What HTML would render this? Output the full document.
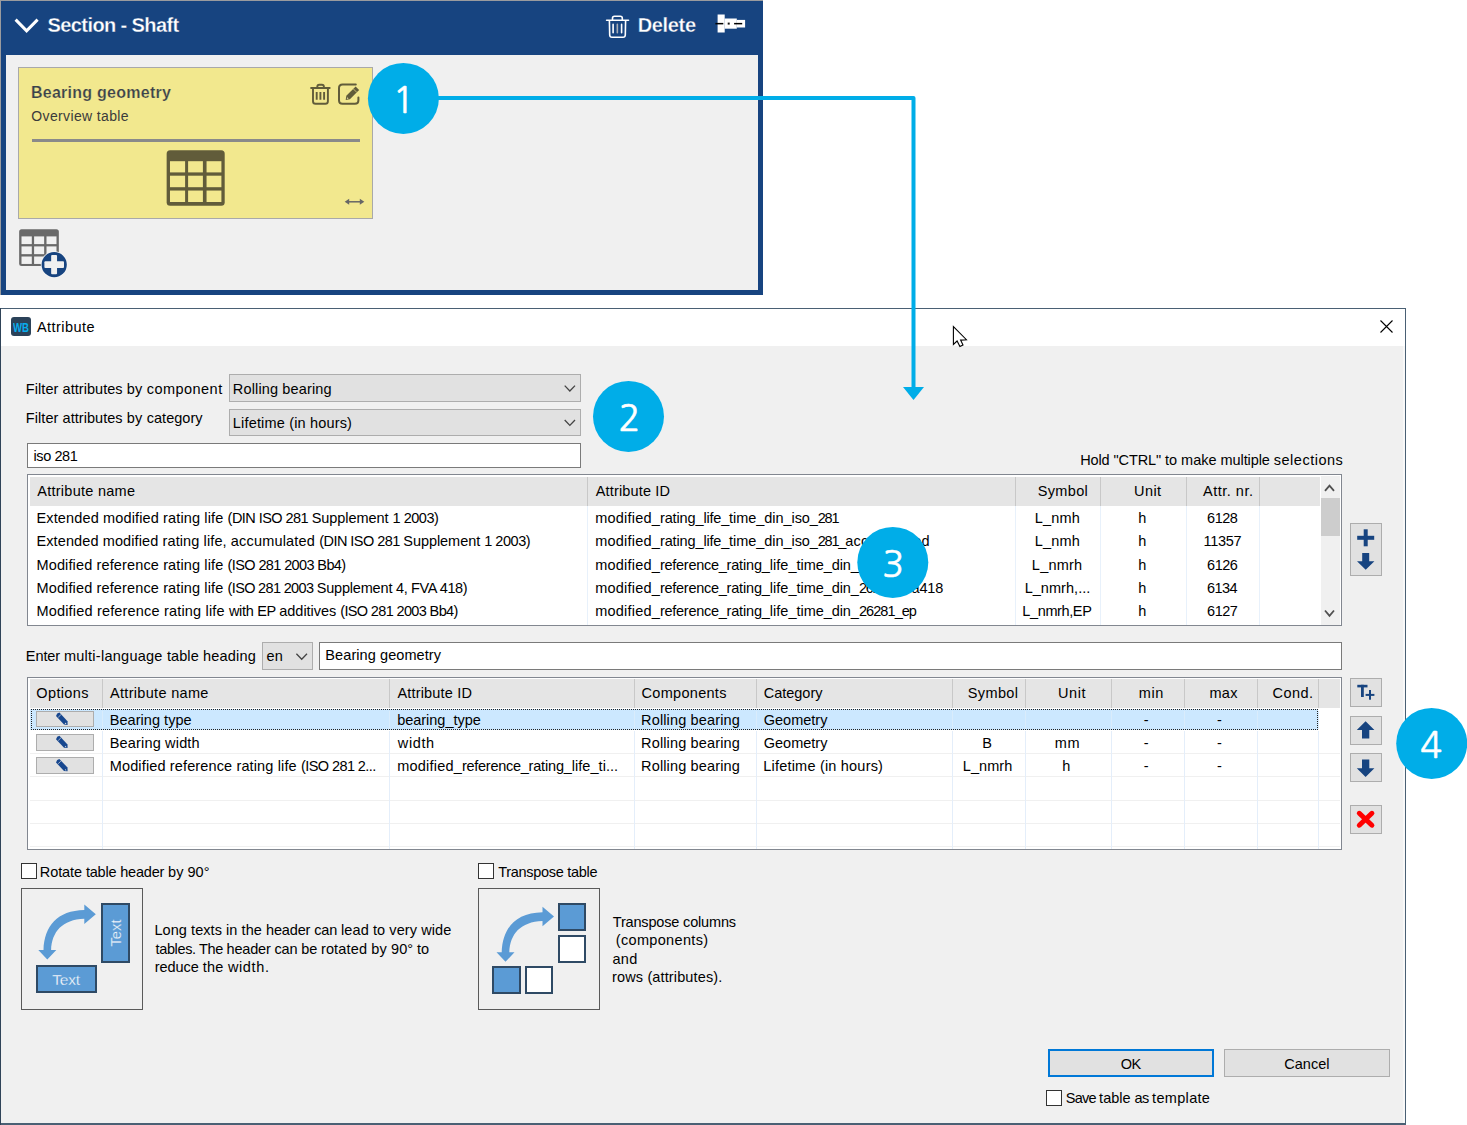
<!DOCTYPE html>
<html lang="en"><head><meta charset="utf-8"><title>Attribute</title>
<style>
html,body{margin:0;padding:0;background:#fff}
body{width:1467px;height:1125px;position:relative;overflow:hidden;font-family:"Liberation Sans",sans-serif}
.b{position:absolute;box-sizing:border-box}
.t{position:absolute;white-space:nowrap;line-height:20px;font-size:14.5px;color:#000}
</style></head><body>
<div class="b" style="left:0px;top:0px;width:763px;height:295px;background:#9a9b9e"></div>
<div class="b" style="left:1px;top:1px;width:762px;height:294px;background:#174480"></div>
<div class="b" style="left:6px;top:55px;width:752px;height:234.5px;background:#f0f0f0"></div>
<div class="b" style="left:18px;top:67px;width:355px;height:151.5px;background:#f2e88e;border:1px solid #a9a9a9"></div>
<div class="b" style="left:32px;top:139.1px;width:327.5px;height:2.7px;background:#8a8a8a"></div>
<div class="b" style="left:0px;top:308px;width:1406px;height:817px;background:#f0f0f0;border:1px solid #4a6074;border-bottom-width:2px"></div>
<div class="b" style="left:0px;top:308px;width:1.3px;height:817px;background:#2f4358"></div>
<div class="b" style="left:1.3px;top:309px;width:1403.7px;height:37px;background:#fff"></div>
<div class="b" style="left:1403px;top:346px;width:2px;height:777px;background:#f8f8f8"></div>
<div class="b" style="left:229px;top:374px;width:352px;height:28px;background:#e1e1e1;border:1px solid #adadad"></div>
<div class="b" style="left:229px;top:409px;width:352px;height:27px;background:#e1e1e1;border:1px solid #adadad"></div>
<div class="b" style="left:27px;top:443px;width:554px;height:25px;background:#fff;border:1px solid #7a7a7a"></div>
<div class="b" style="left:27px;top:474px;width:1315px;height:152px;background:#fff;border:1px solid #828790"></div>
<div class="b" style="left:30px;top:477px;width:1289.5px;height:29px;background:#e5e5e5"></div>
<div class="b" style="left:587.0px;top:477px;width:1px;height:29px;background:#c8c8c8"></div>
<div class="b" style="left:587.0px;top:506px;width:1px;height:119px;background:#e8f1fb"></div>
<div class="b" style="left:1015.1px;top:477px;width:1px;height:29px;background:#c8c8c8"></div>
<div class="b" style="left:1015.1px;top:506px;width:1px;height:119px;background:#e8f1fb"></div>
<div class="b" style="left:1100.2px;top:477px;width:1px;height:29px;background:#c8c8c8"></div>
<div class="b" style="left:1100.2px;top:506px;width:1px;height:119px;background:#e8f1fb"></div>
<div class="b" style="left:1186.1px;top:477px;width:1px;height:29px;background:#c8c8c8"></div>
<div class="b" style="left:1186.1px;top:506px;width:1px;height:119px;background:#e8f1fb"></div>
<div class="b" style="left:1259.2px;top:477px;width:1px;height:29px;background:#c8c8c8"></div>
<div class="b" style="left:1259.2px;top:506px;width:1px;height:119px;background:#e8f1fb"></div>
<div class="b" style="left:1320.5px;top:476px;width:19px;height:149px;background:#f0f0f0"></div>
<div class="b" style="left:1320.5px;top:497.5px;width:19px;height:38px;background:#cdcdcd"></div>
<div class="b" style="left:1350px;top:523px;width:31.5px;height:53px;background:#e1e1e1;border:1px solid #adadad"></div>
<div class="b" style="left:262px;top:642px;width:51px;height:28px;background:#e1e1e1;border:1px solid #adadad"></div>
<div class="b" style="left:319px;top:642px;width:1023px;height:28px;background:#fff;border:1px solid #7a7a7a"></div>
<div class="b" style="left:27px;top:677px;width:1315px;height:173px;background:#fff;border:1px solid #828790"></div>
<div class="b" style="left:30px;top:679px;width:1309.5px;height:29px;background:#e5e5e5"></div>
<div class="b" style="left:31px;top:709px;width:1287px;height:21px;background:#cce8ff;border:1px dotted #222"></div>
<div class="b" style="left:30px;top:709px;width:1px;height:21px;background:#cce8ff"></div>
<div class="b" style="left:30px;top:753.0px;width:1310px;height:1px;background:#f0f0f0"></div>
<div class="b" style="left:30px;top:776.3px;width:1310px;height:1px;background:#f0f0f0"></div>
<div class="b" style="left:30px;top:799.8px;width:1310px;height:1px;background:#f0f0f0"></div>
<div class="b" style="left:30px;top:823.2px;width:1310px;height:1px;background:#f0f0f0"></div>
<div class="b" style="left:30px;top:846.2px;width:1310px;height:1px;background:#f0f0f0"></div>
<div class="b" style="left:102.1px;top:679px;width:1px;height:29px;background:#c8c8c8"></div>
<div class="b" style="left:102.1px;top:730.5px;width:1px;height:118.5px;background:#e4eefa"></div>
<div class="b" style="left:102.1px;top:710.5px;width:1px;height:18.5px;background:#d9ecfc"></div>
<div class="b" style="left:389.2px;top:679px;width:1px;height:29px;background:#c8c8c8"></div>
<div class="b" style="left:389.2px;top:730.5px;width:1px;height:118.5px;background:#e4eefa"></div>
<div class="b" style="left:389.2px;top:710.5px;width:1px;height:18.5px;background:#d9ecfc"></div>
<div class="b" style="left:633.9px;top:679px;width:1px;height:29px;background:#c8c8c8"></div>
<div class="b" style="left:633.9px;top:730.5px;width:1px;height:118.5px;background:#e4eefa"></div>
<div class="b" style="left:633.9px;top:710.5px;width:1px;height:18.5px;background:#d9ecfc"></div>
<div class="b" style="left:756.2px;top:679px;width:1px;height:29px;background:#c8c8c8"></div>
<div class="b" style="left:756.2px;top:730.5px;width:1px;height:118.5px;background:#e4eefa"></div>
<div class="b" style="left:756.2px;top:710.5px;width:1px;height:18.5px;background:#d9ecfc"></div>
<div class="b" style="left:951.7px;top:679px;width:1px;height:29px;background:#c8c8c8"></div>
<div class="b" style="left:951.7px;top:730.5px;width:1px;height:118.5px;background:#e4eefa"></div>
<div class="b" style="left:951.7px;top:710.5px;width:1px;height:18.5px;background:#d9ecfc"></div>
<div class="b" style="left:1025.0px;top:679px;width:1px;height:29px;background:#c8c8c8"></div>
<div class="b" style="left:1025.0px;top:730.5px;width:1px;height:118.5px;background:#e4eefa"></div>
<div class="b" style="left:1025.0px;top:710.5px;width:1px;height:18.5px;background:#d9ecfc"></div>
<div class="b" style="left:1110.7px;top:679px;width:1px;height:29px;background:#c8c8c8"></div>
<div class="b" style="left:1110.7px;top:730.5px;width:1px;height:118.5px;background:#e4eefa"></div>
<div class="b" style="left:1110.7px;top:710.5px;width:1px;height:18.5px;background:#d9ecfc"></div>
<div class="b" style="left:1184.4px;top:679px;width:1px;height:29px;background:#c8c8c8"></div>
<div class="b" style="left:1184.4px;top:730.5px;width:1px;height:118.5px;background:#e4eefa"></div>
<div class="b" style="left:1184.4px;top:710.5px;width:1px;height:18.5px;background:#d9ecfc"></div>
<div class="b" style="left:1257.4px;top:679px;width:1px;height:29px;background:#c8c8c8"></div>
<div class="b" style="left:1257.4px;top:730.5px;width:1px;height:118.5px;background:#e4eefa"></div>
<div class="b" style="left:1257.4px;top:710.5px;width:1px;height:18.5px;background:#d9ecfc"></div>
<div class="b" style="left:1318.3px;top:679px;width:1px;height:29px;background:#c8c8c8"></div>
<div class="b" style="left:1318.3px;top:730.5px;width:1px;height:118.5px;background:#e4eefa"></div>
<div class="b" style="left:1318.3px;top:710.5px;width:1px;height:18.5px;background:#d9ecfc"></div>
<div class="b" style="left:35.7px;top:711px;width:58.3px;height:16px;background:#e1e1e1;border:1px solid #adadad"></div>
<div class="b" style="left:35.7px;top:734px;width:58.3px;height:16.7px;background:#e1e1e1;border:1px solid #adadad"></div>
<div class="b" style="left:35.7px;top:757.2px;width:58.3px;height:16.6px;background:#e1e1e1;border:1px solid #adadad"></div>
<div class="b" style="left:1350px;top:677.5px;width:31.6px;height:29.2px;background:#e1e1e1;border:1px solid #adadad"></div>
<div class="b" style="left:1350px;top:715.5px;width:31.6px;height:29px;background:#e1e1e1;border:1px solid #adadad"></div>
<div class="b" style="left:1350px;top:753.2px;width:31.6px;height:29.2px;background:#e1e1e1;border:1px solid #adadad"></div>
<div class="b" style="left:1350px;top:805px;width:31.6px;height:28.6px;background:#e1e1e1;border:1px solid #adadad"></div>
<div class="b" style="left:21px;top:863px;width:16px;height:16px;background:#fff;border:1px solid #333"></div>
<div class="b" style="left:478px;top:863px;width:16px;height:16px;background:#fff;border:1px solid #333"></div>
<div class="b" style="left:1046.4px;top:1089.6px;width:16px;height:16px;background:#fff;border:1px solid #333"></div>
<div class="b" style="left:21px;top:888px;width:122px;height:121.7px;border:1px solid #5a5a5a"></div>
<div class="b" style="left:478px;top:888px;width:122px;height:121.7px;border:1px solid #5a5a5a"></div>
<div class="b" style="left:36px;top:965px;width:60.6px;height:28.2px;background:#5b9bd5;border:2px solid #2f4a65"></div>
<div class="b" style="left:101.4px;top:902.6px;width:28.3px;height:60.1px;background:#5b9bd5;border:2px solid #2f4a65"></div>
<div class="b" style="left:557.6px;top:902.6px;width:28.2px;height:28.4px;background:#5b9bd5;border:2px solid #2f4a65"></div>
<div class="b" style="left:557.6px;top:934.6px;width:28.2px;height:28.4px;background:#fff;border:2px solid #2f4a65"></div>
<div class="b" style="left:492.2px;top:966.1px;width:28.8px;height:28.3px;background:#5b9bd5;border:2px solid #2f4a65"></div>
<div class="b" style="left:524.5px;top:966.1px;width:28.5px;height:28.3px;background:#fff;border:2px solid #2f4a65"></div>
<div class="b" style="left:1048px;top:1049px;width:166px;height:28.3px;background:#e1e1e1;border:2px solid #0078d7"></div>
<div class="b" style="left:1223.8px;top:1049px;width:166.2px;height:28.3px;background:#e1e1e1;border:1px solid #adadad"></div>
<span class="t" style="left:95.5px;top:922.6px;width:40px;text-align:center;font-size:14.8px;color:#fff;-webkit-text-stroke:0.3px #5b9bd5;transform:rotate(-90deg);transform-origin:50% 50%">Text</span>
<div class="b" style="left:11.2px;top:316.8px;width:19.4px;height:19.2px;background:#2b4259;border-radius:3px"></div>
<span class="t" style="left:5.8px;top:317.7px;width:30px;text-align:center;font-size:12px;font-weight:bold;color:#08aeee;transform:scaleX(0.8);transform-origin:50% 50%">WB</span>
<span class="t" style="left:47.59px;top:15.07px;font-size:20px;font-weight:bold;color:#fff;letter-spacing:-0.600px;-webkit-text-stroke:0.3px #174480">Section - Shaft</span>
<span class="t" style="left:637.75px;top:15.07px;font-size:20px;font-weight:bold;color:#fff;letter-spacing:-0.356px;-webkit-text-stroke:0.3px #174480">Delete</span>
<span class="t" style="left:31.00px;top:83.46px;font-size:16px;font-weight:bold;color:#3b424c;letter-spacing:0.257px;-webkit-text-stroke:0.2px #f2e88e">Bearing geometry</span>
<span class="t" style="left:31.34px;top:105.75px;font-size:14px;color:#3b3b3b;letter-spacing:0.356px">Overview table</span>
<span class="t" style="left:36.90px;top:317.28px;letter-spacing:0.461px">Attribute</span>
<span class="t" style="left:232.87px;top:378.78px;letter-spacing:0.137px">Rolling bearing</span>
<span class="t" style="left:232.87px;top:412.58px;letter-spacing:0.169px">Lifetime (in hours)</span>
<span class="t" style="left:33.49px;top:445.58px;letter-spacing:-0.410px">iso 281</span>
<span class="t" style="left:37.20px;top:480.98px;letter-spacing:0.268px">Attribute name</span>
<span class="t" style="left:595.80px;top:480.98px;letter-spacing:0.143px">Attribute ID</span>
<span class="t" style="left:1037.75px;top:480.98px;letter-spacing:0.332px">Symbol</span>
<span class="t" style="left:1134.09px;top:480.98px;letter-spacing:0.424px">Unit</span>
<span class="t" style="left:1203.00px;top:480.98px;letter-spacing:0.509px">Attr. nr.</span>
<span class="t" style="left:1034.87px;top:507.68px;letter-spacing:0.153px">L_nmh</span>
<span class="t" style="left:1138.32px;top:507.68px">h</span>
<span class="t" style="left:1207.12px;top:507.68px;letter-spacing:-0.497px">6128</span>
<span class="t" style="left:1034.87px;top:531.28px;letter-spacing:0.153px">L_nmh</span>
<span class="t" style="left:1138.32px;top:531.28px">h</span>
<span class="t" style="left:1203.59px;top:531.28px;letter-spacing:-0.338px">11357</span>
<span class="t" style="left:1031.87px;top:554.78px;letter-spacing:0.217px">L_nmrh</span>
<span class="t" style="left:1138.32px;top:554.78px">h</span>
<span class="t" style="left:1207.12px;top:554.78px;letter-spacing:-0.497px">6126</span>
<span class="t" style="left:1024.67px;top:577.58px;letter-spacing:0.040px">L_nmrh,...</span>
<span class="t" style="left:1138.32px;top:577.58px">h</span>
<span class="t" style="left:1207.12px;top:577.58px;letter-spacing:-0.572px">6134</span>
<span class="t" style="left:1022.37px;top:600.98px;letter-spacing:-0.387px">L_nmrh,EP</span>
<span class="t" style="left:1138.32px;top:600.98px">h</span>
<span class="t" style="left:1207.12px;top:600.98px;letter-spacing:-0.497px">6127</span>
<span class="t" style="left:266.55px;top:645.98px;letter-spacing:0.139px">en</span>
<span class="t" style="left:325.37px;top:645.28px;letter-spacing:0.079px">Bearing geometry</span>
<span class="t" style="left:36.32px;top:682.88px;letter-spacing:0.360px">Options</span>
<span class="t" style="left:110.00px;top:682.88px;letter-spacing:0.314px">Attribute name</span>
<span class="t" style="left:397.40px;top:682.88px;letter-spacing:0.189px">Attribute ID</span>
<span class="t" style="left:641.52px;top:682.88px;letter-spacing:0.302px">Components</span>
<span class="t" style="left:763.72px;top:682.88px;letter-spacing:-0.008px">Category</span>
<span class="t" style="left:967.85px;top:682.88px;letter-spacing:0.352px">Symbol</span>
<span class="t" style="left:1058.09px;top:682.88px;letter-spacing:0.557px">Unit</span>
<span class="t" style="left:1138.77px;top:682.88px;letter-spacing:0.600px">min</span>
<span class="t" style="left:1209.49px;top:682.88px;letter-spacing:0.257px">max</span>
<span class="t" style="left:1272.52px;top:682.88px;letter-spacing:0.449px">Cond.</span>
<span class="t" style="left:109.77px;top:709.68px;letter-spacing:0.037px">Bearing type</span>
<span class="t" style="left:397.19px;top:709.68px;letter-spacing:-0.023px">bearing_type</span>
<span class="t" style="left:109.77px;top:732.98px;letter-spacing:0.166px">Bearing width</span>
<span class="t" style="left:397.85px;top:732.98px;letter-spacing:0.600px">width</span>
<span class="t" style="left:641.07px;top:709.68px;letter-spacing:0.144px">Rolling bearing</span>
<span class="t" style="left:1143.87px;top:709.68px">-</span>
<span class="t" style="left:1217.12px;top:709.68px">-</span>
<span class="t" style="left:641.07px;top:732.98px;letter-spacing:0.144px">Rolling bearing</span>
<span class="t" style="left:1143.87px;top:732.98px">-</span>
<span class="t" style="left:1217.12px;top:732.98px">-</span>
<span class="t" style="left:641.07px;top:756.18px;letter-spacing:0.144px">Rolling bearing</span>
<span class="t" style="left:1143.87px;top:756.18px">-</span>
<span class="t" style="left:1217.12px;top:756.18px">-</span>
<span class="t" style="left:763.72px;top:709.68px">Geometry</span>
<span class="t" style="left:763.72px;top:732.98px">Geometry</span>
<span class="t" style="left:763.27px;top:756.18px;letter-spacing:0.202px">Lifetime (in hours)</span>
<span class="t" style="left:982.15px;top:732.98px">B</span>
<span class="t" style="left:1054.79px;top:732.98px;letter-spacing:0.600px">mm</span>
<span class="t" style="left:962.87px;top:756.18px;letter-spacing:0.057px">L_nmrh</span>
<span class="t" style="left:1062.27px;top:756.18px">h</span>
<span class="t" style="left:498.17px;top:861.68px;letter-spacing:-0.288px">Transpose table</span>
<span class="t" style="left:612.77px;top:911.78px;letter-spacing:-0.169px">Transpose columns</span>
<span class="t" style="left:615.82px;top:930.08px;letter-spacing:0.326px">(components)</span>
<span class="t" style="left:612.55px;top:948.58px;letter-spacing:0.237px">and</span>
<span class="t" style="left:612.09px;top:966.88px;letter-spacing:0.132px">rows (attributes).</span>
<span class="t" style="left:1120.86px;top:1053.68px;letter-spacing:-0.600px">OK</span>
<span class="t" style="left:1284.32px;top:1053.68px">Cancel</span>
<span class="t" style="left:52.16px;top:969.63px;font-size:15.5px;color:#fff;letter-spacing:-0.146px;-webkit-text-stroke:0.3px #5b9bd5">Text</span>
<span class="t" style="left:25.87px;top:378.58px"><span style="letter-spacing:0.061px">Filter </span><span style="letter-spacing:0.043px">attributes </span><span style="letter-spacing:0.237px">by </span><span style="letter-spacing:0.458px">component</span></span>
<span class="t" style="left:25.87px;top:407.58px"><span style="letter-spacing:0.061px">Filter </span><span style="letter-spacing:0.043px">attributes </span><span style="letter-spacing:0.237px">by </span><span style="letter-spacing:0.020px">category</span></span>
<span class="t" style="left:1080.17px;top:449.58px"><span style="letter-spacing:-0.100px">Hold "CTRL" </span><span style="letter-spacing:-0.014px">to make </span><span style="letter-spacing:-0.079px">multiple </span><span style="letter-spacing:0.500px">selections</span></span>
<span class="t" style="left:36.47px;top:507.68px"><span style="letter-spacing:0.138px">Extended modified rating life </span><span style="letter-spacing:-0.541px">(DIN ISO 281 </span><span style="letter-spacing:-0.052px">Supplement </span><span style="letter-spacing:-0.470px">1 2003)</span></span>
<span class="t" style="left:595.29px;top:507.68px"><span style="letter-spacing:0.203px">modified_</span><span style="letter-spacing:-0.134px">rating_</span><span style="letter-spacing:-0.179px">life_</span><span style="letter-spacing:-0.082px">time_</span><span style="letter-spacing:-0.017px">din_</span><span style="letter-spacing:-0.118px">iso_</span><span style="letter-spacing:-1.200px">281</span></span>
<span class="t" style="left:36.47px;top:531.28px"><span style="letter-spacing:0.108px">Extended modified rating life, </span><span style="letter-spacing:0.178px">accumulated </span><span style="letter-spacing:-0.541px">(DIN ISO 281 </span><span style="letter-spacing:-0.052px">Supplement </span><span style="letter-spacing:-0.437px">1 2003)</span></span>
<span class="t" style="left:595.29px;top:531.28px"><span style="letter-spacing:0.203px">modified_</span><span style="letter-spacing:-0.134px">rating_</span><span style="letter-spacing:-0.179px">life_</span><span style="letter-spacing:-0.082px">time_</span><span style="letter-spacing:-0.017px">din_</span><span style="letter-spacing:-0.118px">iso_</span><span style="letter-spacing:-1.183px">281_</span><span style="letter-spacing:0.215px">accumulated</span></span>
<span class="t" style="left:36.47px;top:554.78px"><span style="letter-spacing:0.134px">Modified reference rating life </span><span style="letter-spacing:-0.614px">(ISO 281 2003 Bb4)</span></span>
<span class="t" style="left:595.19px;top:554.78px"><span style="letter-spacing:0.214px">modified_</span><span style="letter-spacing:-0.282px">reference_</span><span style="letter-spacing:-0.162px">rating_</span><span style="letter-spacing:0.041px">life_</span><span style="letter-spacing:-0.062px">time_</span><span style="letter-spacing:-0.060px">din_</span><span style="letter-spacing:-0.963px">26281</span></span>
<span class="t" style="left:36.47px;top:577.58px"><span style="letter-spacing:0.134px">Modified reference rating life </span><span style="letter-spacing:-0.665px">(ISO 281 2003 </span><span style="letter-spacing:-0.181px">Supplement </span><span style="letter-spacing:-0.402px">4, FVA 418)</span></span>
<span class="t" style="left:595.19px;top:577.58px"><span style="letter-spacing:0.214px">modified_</span><span style="letter-spacing:-0.282px">reference_</span><span style="letter-spacing:-0.162px">rating_</span><span style="letter-spacing:0.041px">life_</span><span style="letter-spacing:-0.062px">time_</span><span style="letter-spacing:-0.060px">din_</span><span style="letter-spacing:-1.118px">26281_</span><span style="letter-spacing:-0.170px">fva418</span></span>
<span class="t" style="left:36.47px;top:600.98px"><span style="letter-spacing:0.177px">Modified reference rating life </span><span style="letter-spacing:-0.321px">with EP </span><span style="letter-spacing:-0.038px">additives </span><span style="letter-spacing:-0.638px">(ISO 281 2003 Bb4)</span></span>
<span class="t" style="left:595.19px;top:600.98px"><span style="letter-spacing:0.214px">modified_</span><span style="letter-spacing:-0.282px">reference_</span><span style="letter-spacing:-0.162px">rating_</span><span style="letter-spacing:0.041px">life_</span><span style="letter-spacing:-0.062px">time_</span><span style="letter-spacing:-0.060px">din_</span><span style="letter-spacing:-0.910px">26281_</span><span style="letter-spacing:-1.188px">ep</span></span>
<span class="t" style="left:25.87px;top:646.28px"><span style="letter-spacing:-0.110px">Enter </span><span style="letter-spacing:0.264px">multi-language </span><span style="letter-spacing:0.070px">table </span><span style="letter-spacing:0.219px">heading</span></span>
<span class="t" style="left:109.77px;top:756.18px"><span style="letter-spacing:0.134px">Modified reference rating life </span><span style="letter-spacing:-0.568px">(ISO 281 2...</span></span>
<span class="t" style="left:397.19px;top:756.18px"><span style="letter-spacing:0.214px">modified_</span><span style="letter-spacing:-0.282px">reference_</span><span style="letter-spacing:-0.162px">rating_</span><span style="letter-spacing:0.041px">life_</span><span style="letter-spacing:0.069px">ti...</span></span>
<span class="t" style="left:39.87px;top:861.68px"><span style="letter-spacing:-0.102px">Rotate </span><span style="letter-spacing:-0.196px">table </span><span style="letter-spacing:-0.183px">header </span><span style="letter-spacing:-0.005px">by </span><span style="letter-spacing:0.033px">90°</span></span>
<span class="t" style="left:154.47px;top:920.08px"><span style="letter-spacing:0.061px">Long texts in the </span><span style="letter-spacing:-0.144px">header can </span><span style="letter-spacing:0.087px">lead to very wide</span></span>
<span class="t" style="left:155.60px;top:938.68px"><span style="letter-spacing:-0.381px">tables. The </span><span style="letter-spacing:-0.167px">header can be </span><span style="letter-spacing:0.147px">rotated by </span>90° to</span>
<span class="t" style="left:154.69px;top:956.88px"><span style="letter-spacing:-0.037px">reduce </span><span style="letter-spacing:0.235px">the </span><span style="letter-spacing:0.621px">width.</span></span>
<span class="t" style="left:1065.75px;top:1087.98px"><span style="letter-spacing:-0.745px">Save </span>table <span style="letter-spacing:-0.630px">as </span><span style="letter-spacing:0.325px">template</span></span>
<svg width="1467" height="1125" viewBox="0 0 1467 1125" style="position:absolute;left:0;top:0;font-family:'Liberation Sans',sans-serif"><polyline points="15.6,19.6 26.6,30.8 37.6,19.6" fill="none" stroke="#fff" stroke-width="3"/>
<g fill="none" stroke="#fff" stroke-width="1.6" stroke-linecap="round" stroke-linejoin="round"><path d="M606.6,20.3H628.5"/><path d="M612.5,20V18.3Q612.5,16.3 614.5,16.3H620.3Q622.3,16.3 622.3,18.3V20"/><path d="M609.4,20.8L609.7,35Q609.8,37.3 612,37.3H623Q625.2,37.3 625.3,35L625.6,20.8"/><path d="M613.1,24.4V32.8M621.6,24.4V32.8"/><path d="M617.35,24.4V32.8" stroke="#a9adb5"/></g>
<g><rect x="717.6" y="14.5" width="7.1" height="18" fill="#fff"/><rect x="724.6" y="18.5" width="12.2" height="10.2" fill="#fff"/><rect x="736.7" y="19.9" width="8.4" height="7.6" fill="#fff"/><rect x="715.4" y="22.9" width="7.9" height="1.5" fill="#000"/><rect x="734.1" y="22.9" width="8.1" height="1.5" fill="#000"/><rect x="727.7" y="22.6" width="2" height="2" fill="#111"/></g>
<g fill="none" stroke="#615c3a" stroke-width="1.9" stroke-linecap="round" stroke-linejoin="round"><path d="M311.1,88.05H329.7"/><path d="M317.3,88V86.7Q317.3,84.7 319.3,84.7H321.9Q323.9,84.7 323.9,86.7V88"/><path d="M313,88.6V101.2Q313,103.8 315.6,103.8H325.3Q327.9,103.8 327.9,101.2V88.6"/></g>
<g stroke="#615c3a" stroke-width="1.9" stroke-linecap="butt"><path d="M316.7,91.9V99.7M320.4,91.9V99.7M324.1,91.9V99.7"/></g>
<g fill="none" stroke="#615c3a" stroke-width="2" stroke-linecap="round" stroke-linejoin="round"><path d="M355.8,84.6H342.5Q339,84.6 339,88.1V100.2Q339,103.7 342.5,103.7H354.9Q358.4,103.7 358.4,100.2V97.6"/></g>
<path d="M345.7,100L346.33,95.83L355.63,86.53L359.17,90.07L349.87,99.37Z" fill="#615c3a"/>
<path d="M353.3,88.86L356.84,92.4" stroke="#d9cf7c" stroke-width="0.8"/><path d="M346.8,99L347.3,97.3L348.6,98.6Z" fill="#e6dfa8"/>
<g><rect x="166.65" y="150.35" width="58.05" height="55.3" rx="3.5" fill="#615c3a"/><rect x="169.98" y="161.2" width="15.12" height="11.2" fill="#f2e88e"/><rect x="169.98" y="175.7" width="15.12" height="11.5" fill="#f2e88e"/><rect x="169.98" y="190.55" width="15.12" height="11.45" fill="#f2e88e"/><rect x="188.1" y="161.2" width="14.8" height="11.2" fill="#f2e88e"/><rect x="188.1" y="175.7" width="14.8" height="11.5" fill="#f2e88e"/><rect x="188.1" y="190.55" width="14.8" height="11.45" fill="#f2e88e"/><rect x="206.55" y="161.2" width="14.85" height="11.2" fill="#f2e88e"/><rect x="206.55" y="175.7" width="14.85" height="11.5" fill="#f2e88e"/><rect x="206.55" y="190.55" width="14.85" height="11.45" fill="#f2e88e"/></g>
<g stroke="#666" stroke-width="1.5" fill="#666"><path d="M347,201.8H362"/><path d="M344.7,201.8L349.2,198.8V204.8Z" stroke="none"/><path d="M364.3,201.8L359.8,198.8V204.8Z" stroke="none"/></g>
<g><rect x="19.15" y="229.15" width="39.7" height="36.85" rx="2.5" fill="#696969"/><rect x="21.5" y="236.4" width="10.3" height="7.7" fill="#f0f0f0"/><rect x="21.5" y="246.4" width="10.3" height="7.75" fill="#f0f0f0"/><rect x="21.5" y="256.5" width="10.3" height="7.45" fill="#f0f0f0"/><rect x="34.1" y="236.4" width="10.05" height="7.7" fill="#f0f0f0"/><rect x="34.1" y="246.4" width="10.05" height="7.75" fill="#f0f0f0"/><rect x="34.1" y="256.5" width="10.05" height="7.45" fill="#f0f0f0"/><rect x="46.5" y="236.4" width="10" height="7.7" fill="#f0f0f0"/><rect x="46.5" y="246.4" width="10" height="7.75" fill="#f0f0f0"/><rect x="46.5" y="256.5" width="10" height="7.45" fill="#f0f0f0"/><circle cx="54.2" cy="264.7" r="13.4" fill="#f4f4f4"/><circle cx="54.2" cy="264.7" r="12.6" fill="#174480"/><rect x="44.4" y="261.3" width="19.6" height="6.6" rx="1" fill="#f0f0f0"/><rect x="51.15" y="254.9" width="5.9" height="19.4" rx="1" fill="#f0f0f0"/></g>
<path d="M1380.5,320.5L1392.5,332.5M1392.5,320.5L1380.5,332.5" stroke="#000" stroke-width="1.1" fill="none"/>
<path d="M953.4,326.6V344.4L957.1,341L959.9,346.6L963,345L960.6,340.1L966.4,339.7Z" fill="#fff" stroke="#000" stroke-width="1.1" stroke-linejoin="miter"/>
<polyline points="564.7,385.6 569.85,391 575,385.6" fill="none" stroke="#444" stroke-width="1.3"/>
<polyline points="564.7,420 569.85,425.4 575,420" fill="none" stroke="#444" stroke-width="1.3"/>
<polyline points="296.4,653.8 301.7,659.2 307,653.8" fill="none" stroke="#444" stroke-width="1.3"/>
<polyline points="1325,490.8 1329.5,485.6 1334,490.8" fill="none" stroke="#505050" stroke-width="1.8"/>
<polyline points="1325,610.5 1329.5,615.8 1334,610.5" fill="none" stroke="#505050" stroke-width="1.8"/>
<g fill="#174480"><rect x="1357.2" y="535.8" width="17" height="4"/><rect x="1363.7" y="529.3" width="4" height="17"/><path d="M1362.2,553H1369.2V561.3H1374.4L1365.7,569.8L1357,561.3H1362.2Z"/></g>
<g fill="#174480"><rect x="1357.3" y="684.8" width="10.2" height="2.6"/><rect x="1361" y="684.8" width="2.8" height="12.2"/><rect x="1365.6" y="693.9" width="8.8" height="2"/><rect x="1369" y="690" width="2" height="9.7"/><path d="M1365.6,721.2L1374.4,730H1369.3V738.5H1362V730H1356.8Z"/><path d="M1365.6,776.9L1374.4,768.2H1369.3V759.6H1362V768.2H1356.8Z"/></g>
<path d="M1359.3,813.3L1371.9,825.2M1371.9,813.3L1359.3,825.2" stroke="#ff0000" stroke-width="5" stroke-linecap="round" fill="none"/>
<g transform="translate(56,713)" fill="#17478f"><path d="M1.2,0.6L3.4,-0.4L11.5,8.2L11.6,11.9L8,11.5L0,3Z"/><path d="M9.2,9.6L10.6,11L8.9,10.9Z" fill="#e1e1e1"/><path d="M2.2,4.3L4.9,1.7" stroke="#e1e1e1" stroke-width="0.7"/></g>
<g transform="translate(56,736.2)" fill="#17478f"><path d="M1.2,0.6L3.4,-0.4L11.5,8.2L11.6,11.9L8,11.5L0,3Z"/><path d="M9.2,9.6L10.6,11L8.9,10.9Z" fill="#e1e1e1"/><path d="M2.2,4.3L4.9,1.7" stroke="#e1e1e1" stroke-width="0.7"/></g>
<g transform="translate(56,759.4)" fill="#17478f"><path d="M1.2,0.6L3.4,-0.4L11.5,8.2L11.6,11.9L8,11.5L0,3Z"/><path d="M9.2,9.6L10.6,11L8.9,10.9Z" fill="#e1e1e1"/><path d="M2.2,4.3L4.9,1.7" stroke="#e1e1e1" stroke-width="0.7"/></g>
<g transform="translate(38.3,904)" fill="#5b9bd5"><path d="M0,46 L9,55.5 L18,46 L12.8,46 C13.5,28 24,15.5 46,14.8 L46,20 L57.5,10.3 L46,0.5 L46,6 C19,6.5 6,22 5.2,46 Z"/></g>
<g transform="translate(496.5,906.3)" fill="#5b9bd5"><path d="M0,46 L9,55.5 L18,46 L12.8,46 C13.5,28 24,15.5 46,14.8 L46,20 L57.5,10.3 L46,0.5 L46,6 C19,6.5 6,22 5.2,46 Z"/></g>
<path d="M430,98H913.5V388" fill="none" stroke="#00ade8" stroke-width="4" stroke-linejoin="round"/>
<path d="M903,387H924L913.5,400Z" fill="#00ade8"/>
<circle cx="403.4" cy="98.4" r="35.5" fill="#00ade8"/>
<circle cx="628.5" cy="416.4" r="35.5" fill="#00ade8"/>
<circle cx="892.8" cy="562.4" r="35.5" fill="#00ade8"/>
<circle cx="1431.7" cy="743.4" r="35.5" fill="#00ade8"/><text x="392.77" y="112.9" font-size="36" fill="#fff" stroke="#fff" stroke-width="0.6" font-family="NanumGothic, 'Liberation Sans', sans-serif">1</text><text x="618.42" y="431.0" font-size="36" fill="#fff" stroke="#fff" stroke-width="0.6" font-family="NanumGothic, 'Liberation Sans', sans-serif">2</text><text x="882.20" y="576.9" font-size="36" fill="#fff" stroke="#fff" stroke-width="0.6" font-family="NanumGothic, 'Liberation Sans', sans-serif">3</text><text x="1420.23" y="757.9" font-size="36" fill="#fff" stroke="#fff" stroke-width="0.6" font-family="NanumGothic, 'Liberation Sans', sans-serif">4</text></svg>
</body></html>
